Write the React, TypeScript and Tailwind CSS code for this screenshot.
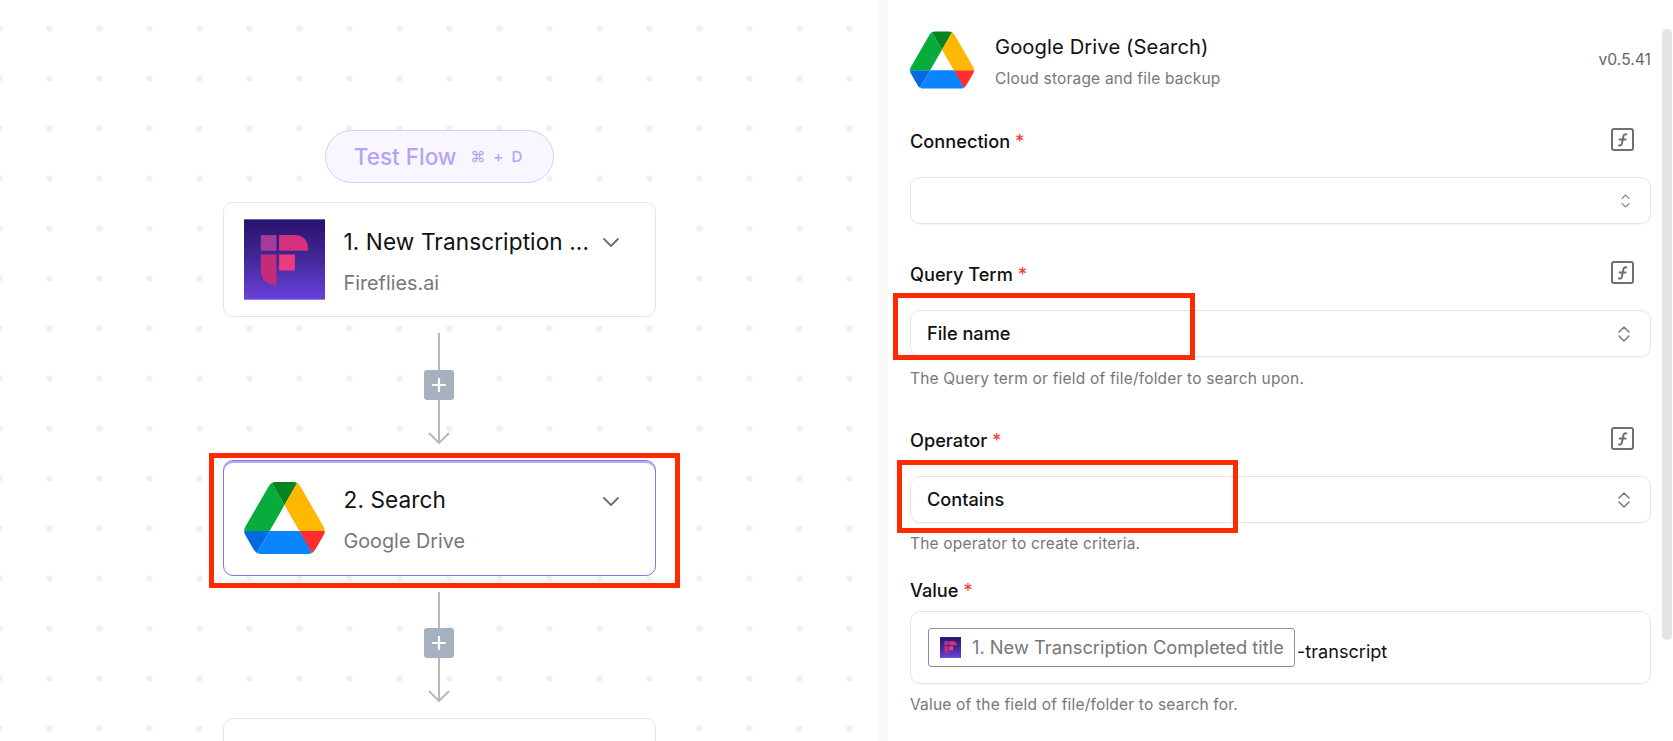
import React from "react";

function DriveLogo({ className }: { className: string }) {
  return (
    <svg viewBox="0 0 87.3 78" className={className}>
      <path d="m6.6 66.85 3.85 6.65c.8 1.4 1.95 2.5 3.3 3.3l13.75-23.8h-27.5c0 1.55.4 3.1 1.2 4.5z" fill="#006be0" />
      <path d="m43.65 25-13.75-23.8c-1.35.8-2.5 1.9-3.3 3.3l-25.4 44a9.06 9.06 0 0 0 -1.2 4.5h27.5z" fill="#06ad3d" />
      <path d="m73.55 76.8c1.35-.8 2.5-1.9 3.3-3.3l1.6-2.75 7.65-13.25c.8-1.4 1.2-2.95 1.2-4.5h-27.502l5.852 11.5z" fill="#ff2d2d" />
      <path d="m43.65 25 13.75-23.8c-1.35-.8-2.9-1.2-4.5-1.2h-18.5c-1.6 0-3.15.45-4.5 1.2z" fill="#04841c" />
      <path d="m59.8 53h-32.3l-13.75 23.8c1.35.8 2.9 1.2 4.5 1.2h50.8c1.6 0 3.15-.45 4.5-1.2z" fill="#0a84ff" />
      <path d="m73.4 26.5-12.7-22c-.8-1.4-1.95-2.5-3.3-3.3l-13.75 23.8 16.15 28h27.45c0-1.55-.4-3.1-1.2-4.5z" fill="#ffb700" />
    </svg>
  );
}

function FirefliesLogo({ className, id }: { className: string; id: string }) {
  return (
    <svg viewBox="0 0 242 240" className={className}>
      <defs>
        <linearGradient id={id} x1="0" y1="0" x2="0" y2="1">
          <stop offset="0" stopColor="#27126a" />
          <stop offset="0.5" stopColor="#43289a" />
          <stop offset="1" stopColor="#6a42dc" />
        </linearGradient>
      </defs>
      <rect width="242" height="240" fill={`url(#${id})`} />
      <path d="M50 47H97V94H50Z" fill="#a43a9a" />
      <path d="M105 47H150Q192 47 192 94H105Z" fill="#d6307f" />
      <path d="M105 105H152V153H105Z" fill="#ec3a80" />
      <path d="M50 105H97V196Q50 196 50 150Z" fill="#c42b78" />
    </svg>
  );
}

function Chevron() {
  return (
    <svg viewBox="0 0 16 9" className="w-4 h-[9px]" fill="none" stroke="#6e6e6e" strokeWidth="1.8" strokeLinecap="round" strokeLinejoin="round">
      <path d="M1 1l7 7 7-7" />
    </svg>
  );
}

function Connector({ lineClass }: { lineClass: string }) {
  return (
    <div className="flex flex-col items-center w-[30px] my-4">
      <div className={`w-[2px] bg-[#b8b8b8] ${lineClass}`} />
      <div className="w-[30px] h-[30px] rounded-[3px] bg-[#a6b1bf] flex items-center justify-center">
        <svg viewBox="0 0 14 14" className="w-[14px] h-[14px]" stroke="#ffffff" strokeWidth="2.2" strokeLinecap="round">
          <path d="M7 1v12M1 7h12" />
        </svg>
      </div>
      <svg viewBox="0 0 22 44" className="w-[22px] h-[44px]" fill="none" stroke="#b8b8b8" strokeWidth="2">
        <path d="M11 0v43" />
        <path d="M1 33l10 10 10-10" />
      </svg>
    </div>
  );
}

function FxIcon() {
  return (
    <svg viewBox="0 0 23 23" className="w-[23px] h-[23px]" fill="none" stroke="#6f6f6f">
      <rect x="1" y="1" width="21" height="21" rx="2" strokeWidth="2" />
      <path d="M8 17.5c1.6.4 2.5-.3 2.9-2l1.5-7.2c.3-1.6 1.3-2.3 3-1.9M8.6 11.5h6" strokeWidth="2" strokeLinecap="round" />
    </svg>
  );
}

function UpDown({ faint }: { faint?: boolean }) {
  return faint ? (
    <svg viewBox="0 0 9 14" className="w-[9px] h-[14px]" fill="none" stroke="#8a8a8a" strokeWidth="1.1" strokeLinecap="round" strokeLinejoin="round">
      <path d="M1 4.5L4.5 1 8 4.5M1 9.5L4.5 13 8 9.5" />
    </svg>
  ) : (
    <svg viewBox="0 0 12 16" className="w-3 h-4" fill="none" stroke="#7a7a7a" strokeWidth="1.5" strokeLinecap="round" strokeLinejoin="round">
      <path d="M1 6l5-5 5 5M1 10l5 5 5-5" />
    </svg>
  );
}

function Label({ text, fx, className }: { text: string; fx?: boolean; className: string }) {
  return (
    <div className={`flex items-center justify-between h-6 pr-[17px] ${className}`}>
      <div className="text-[18.2px] font-medium text-[#111111] -mt-[2px]">
        {text} <span className="text-[#f04438]">*</span>
      </div>
      {fx && <div className="-mt-2"><FxIcon /></div>}
    </div>
  );
}

function Select({ value, faint }: { value?: string; faint?: boolean }) {
  return (
    <div className="h-[47px] rounded-[10px] border border-[#e5e5e5] bg-white shadow-[0_1px_1px_rgba(0,0,0,0.03)] flex items-center justify-between pl-[16px] pr-[20px]">
      <span className="text-[18.2px] font-medium text-[#111111]">{value}</span>
      <UpDown faint={faint} />
    </div>
  );
}

function Help({ text, className }: { text: string; className: string }) {
  return <div className={`h-5 leading-5 text-[15.5px] tracking-[0.19px] text-[#777777] ${className}`}>{text}</div>;
}

export default function App() {
  return (
    <div className="h-[741px] w-[1673px] overflow-hidden flex bg-white font-['Inter',sans-serif]">
      <div className="w-[878px] shrink-0 h-full flex flex-col items-center pt-[130px] bg-white bg-[radial-gradient(circle,#f0f0f0_3px,transparent_3.6px)] bg-[size:50px_50px] bg-[position:24.5px_3.5px]">
        <div className="w-[229px] h-[53px] shrink-0 rounded-full border border-[#d8cefa] bg-[#f8f6fe] flex items-center justify-center gap-[14px] text-[#b7a3f5]">
          <span className="text-[22.5px] font-medium mt-px">Test Flow</span>
          <span className="text-[15px] font-medium tracking-[2px] mt-px">⌘ + D</span>
        </div>
        <div className="w-[433px] h-[115px] shrink-0 mt-[19px] rounded-[10px] border border-[#e5e5e5] bg-white flex items-center pl-[20px] pr-[36px]">
          <FirefliesLogo id="ff-a" className="w-[81px] h-[81px] shrink-0" />
          <div className="ml-[19px] flex-1 mt-[3px]">
            <div className="text-[22.6px] tracking-[0.1px] leading-7 text-[#111111]">1. New Transcription ...</div>
            <div className="mt-[15px] text-[19.8px] leading-6 text-[#777777]">Fireflies.ai</div>
          </div>
          <div className="-mt-[34px]"><Chevron /></div>
        </div>
        <Connector lineClass="h-[37px]" />
        <div className="relative w-[433px] h-[116px] shrink-0 rounded-[10px] border border-[#8b74ea] shadow-[inset_0_2px_0_#b9a9f3] bg-white flex items-center pl-[20px] pr-[36px]">
          <DriveLogo className="w-[81px] h-[72px] shrink-0" />
          <div className="ml-[19px] flex-1 mt-[3px]">
            <div className="text-[22.6px] tracking-[0.1px] leading-7 text-[#111111]">2. Search</div>
            <div className="mt-[15px] text-[19.8px] leading-6 text-[#777777]">Google Drive</div>
          </div>
          <div className="-mt-[34px]"><Chevron /></div>
          <div className="absolute -left-[15px] -right-[25px] -top-[8px] -bottom-[13px] border-[5px] border-[#ff2a00]" />
        </div>
        <Connector lineClass="h-[36px]" />
        <div className="w-[433px] h-[115px] shrink-0 rounded-[10px] border border-[#e5e5e5] bg-white" />
      </div>

      <div className="w-[10px] shrink-0 bg-[#fafafa]" />

      <div className="flex-1 pl-[22px] pr-[11px] pt-[31px]">
        <div className="flex h-[58px]">
          <DriveLogo className="w-[64px] h-[58px] shrink-0" />
          <div className="ml-[21px] flex-1">
            <div className="text-[20.2px] tracking-[0.1px] leading-7 text-[#111111] mt-[2px]">Google Drive (Search)</div>
            <div className="mt-[8px] text-[15.5px] tracking-[0.19px] leading-5 text-[#777777]">Cloud storage and file backup</div>
          </div>
          <div className="self-center text-[15.7px] text-[#666666]">v0.5.41</div>
        </div>

        <Label text="Connection" fx className="mt-[42px] mb-[22px]" />
        <Select faint />

        <Label text="Query Term" fx className="mt-[40px] mb-[22px]" />
        <div className="relative">
          <Select value="File name" />
          <div className="absolute -left-[17px] w-[302px] -top-[17px] h-[67px] border-[5px] border-[#ff2a00]" />
        </div>
        <Help text="The Query term or field of file/folder to search upon." className="mt-[12px]" />

        <Label text="Operator" fx className="mt-[41px] mb-[22px]" />
        <div className="relative">
          <Select value="Contains" />
          <div className="absolute -left-[13px] w-[341px] -top-[16px] h-[73px] border-[5px] border-[#ff2a00]" />
        </div>
        <Help text="The operator to create criteria." className="mt-[11px]" />

        <Label text="Value" className="mt-[26px] mb-[7px]" />
        <div className="h-[73px] rounded-[10px] border border-[#e5e5e5] bg-white shadow-[0_1px_1px_rgba(0,0,0,0.03)] flex items-center pl-[17px]">
          <div className="h-[39px] w-[367px] rounded-[3px] border border-[#8f8f8f] flex items-center pl-[11px]">
            <FirefliesLogo id="ff-b" className="w-[21px] h-[21px] shrink-0" />
            <span className="ml-[11px] text-[18.3px] text-[#777777] whitespace-nowrap">1. New Transcription Completed title</span>
          </div>
          <span className="ml-[2px] mt-[8px] text-[18.1px] text-[#111111]">-transcript</span>
        </div>
        <Help text="Value of the field of file/folder to search for." className="mt-[11px]" />
      </div>

      <div className="w-[10px] shrink-0 mr-px mt-[29px] h-[611px] rounded-full bg-[#e4e4e6]" />
    </div>
  );
}
